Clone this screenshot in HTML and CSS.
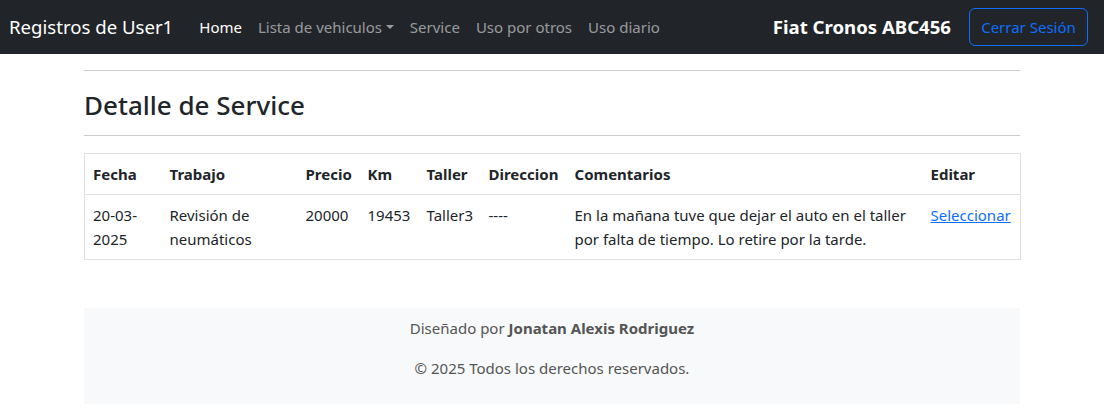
FILE: index.html
```html
<!DOCTYPE html>
<html lang="es">
<head>
<meta charset="utf-8">
<title>Detalle de Service</title>
<link rel="stylesheet" href="styles.css">
</head>
<body>
<nav class="navbar">
  <a class="brand" href="#">Registros de User1</a>
  <ul class="nav">
    <li><a class="nav-link active" href="#">Home</a></li>
    <li><a class="nav-link dropdown" href="#">Lista de vehiculos</a></li>
    <li><a class="nav-link" href="#">Service</a></li>
    <li><a class="nav-link" href="#">Uso por otros</a></li>
    <li><a class="nav-link" href="#">Uso diario</a></li>
  </ul>
  <div class="nav-right">
    <span class="vehicle">Fiat Cronos ABC456</span>
    <button class="btn-outline" type="button">Cerrar Sesión</button>
  </div>
</nav>

<main class="container">
  <hr class="rule">
  <h2 class="title">Detalle de Service</h2>
  <hr class="rule rule-bottom">
  <table class="table">
    <colgroup>
      <col class="c-fecha"><col class="c-trabajo"><col class="c-precio"><col class="c-km">
      <col class="c-taller"><col class="c-dir"><col class="c-com"><col class="c-edit">
    </colgroup>
    <thead>
      <tr>
        <th>Fecha</th><th>Trabajo</th><th>Precio</th><th>Km</th>
        <th>Taller</th><th>Direccion</th><th>Comentarios</th><th>Editar</th>
      </tr>
    </thead>
    <tbody>
      <tr>
        <td>20-03-2025</td>
        <td>Revisión de neumáticos</td>
        <td>20000</td>
        <td>19453</td>
        <td>Taller3</td>
        <td>----</td>
        <td>En la mañana tuve que dejar el auto en el taller por falta de tiempo. Lo retire por la tarde.</td>
        <td><a class="link" href="#">Seleccionar</a></td>
      </tr>
    </tbody>
  </table>
</main>

<footer class="container footer">
  <p>Diseñado por <strong>Jonatan Alexis Rodriguez</strong></p>
  <p>© 2025 Todos los derechos reservados.</p>
</footer>
</body>
</html>
```

FILE: styles.css
```css
* { box-sizing: border-box; }

body {
  margin: 0;
  font-family: "Noto Sans", "Open Sans", sans-serif;
  font-size: 15px;
  line-height: 24px;
  color: #212529;
  background: #fff;
}

.navbar {
  display: flex;
  align-items: center;
  height: 54px;
  padding: 0 16px 0 9px;
  background: #212529;
}

.brand {
  font-size: 18.6px;
  color: #fff;
  text-decoration: none;
  margin-right: 18px;
  white-space: nowrap;
}

.nav {
  display: flex;
  list-style: none;
  margin: 0;
  padding: 0;
  flex: 1;
}

.nav-link {
  display: block;
  padding: 8px;
  color: rgba(255, 255, 255, 0.55);
  text-decoration: none;
  white-space: nowrap;
}

.nav-link.active { color: #fff; }

.dropdown::after {
  content: "";
  display: inline-block;
  margin-left: 0.255em;
  vertical-align: 0.255em;
  border-top: 0.3em solid;
  border-right: 0.3em solid transparent;
  border-left: 0.3em solid transparent;
}

.nav-right {
  display: flex;
  align-items: center;
  gap: 18px;
}

.vehicle {
  color: #fff;
  font-size: 18.6px;
  font-weight: 700;
  white-space: nowrap;
}

.btn-outline {
  font-family: inherit;
  font-size: 15px;
  line-height: 24px;
  height: 38px;
  width: 119px;
  padding: 6px 10px;
  color: #0d6efd;
  background: transparent;
  border: 1px solid #0d6efd;
  border-radius: 6px;
  white-space: nowrap;
}

.container {
  width: 936px;
  margin: 0 auto;
}

.rule {
  margin: 16px 0;
  border: 0;
  border-top: 1px solid #ccc;
}

.title {
  margin: 0;
  font-size: 26px;
  font-weight: 500;
  line-height: 36px;
}

.rule-bottom {
  margin-top: 12px;
  margin-bottom: 17px;
}

.table {
  width: 100%;
  table-layout: fixed;
  border-collapse: collapse;
  border: 1px solid #dee2e6;
  margin-bottom: 16px;
}

.table th,
.table td {
  padding: 8px;
  text-align: left;
  vertical-align: top;
  border-bottom: 1px solid #dee2e6;
}

.table th { font-weight: 700; }

.c-fecha { width: 77px; }
.c-trabajo { width: 136px; }
.c-precio { width: 62px; }
.c-km { width: 59px; }
.c-taller { width: 62px; }
.c-dir { width: 86px; }
.c-com { width: 356px; }
.c-edit { width: 98px; }

.link { color: #0d6efd; }

.footer {
  margin-top: 48px;
  padding: 8px 0;
  background: #f8f9fa;
  text-align: center;
  color: #555;
}

.footer p { margin: 0 0 16px; }
```
